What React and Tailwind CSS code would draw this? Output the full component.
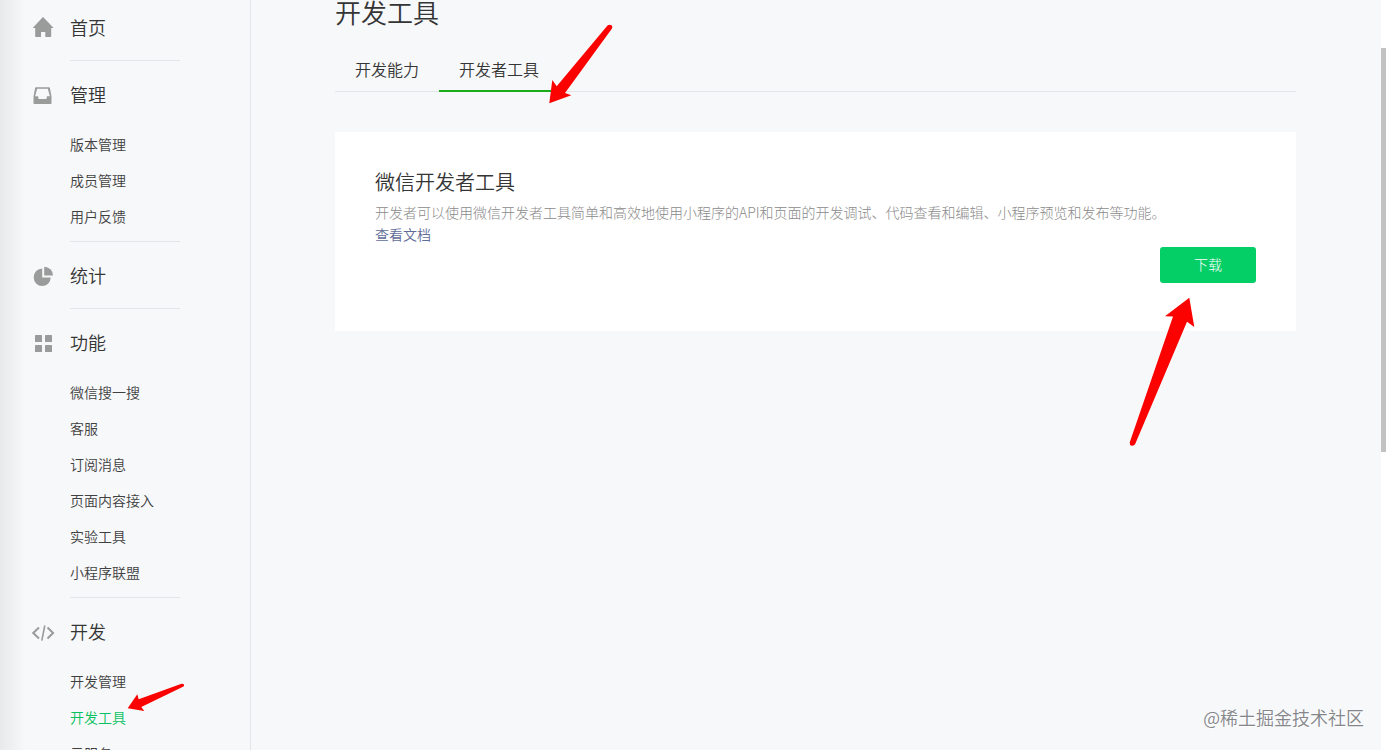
const groups = [
  { title: '首页', icon: HomeIcon, items: [] },
  { title: '管理', icon: TrayIcon, items: ['版本管理', '成员管理', '用户反馈'] },
  { title: '统计', icon: PieIcon, items: [] },
  {
    title: '功能',
    icon: GridIcon,
    items: ['微信搜一搜', '客服', '订阅消息', '页面内容接入', '实验工具', '小程序联盟'],
  },
  { title: '开发', icon: CodeIcon, items: ['开发管理', '开发工具', '云服务'] },
];

function HomeIcon() {
  return (
    <svg viewBox="0 0 24 24" className="size-6 shrink-0 fill-[#9a9b9b]" aria-hidden="true">
      <path d="M12.3 2.2 22.2 12.4c.2.3 0 .6-.3.6H20.200v8.300c0 .4-.3.700-.7.700H14.300v-5h-4.300v5H4.900c-.4 0-.7-.3-.7-.7V13H2.400c-.4 0-.5-.4-.3-.6L11.700 2.200c.2-.2.4-.2.6 0z" />
    </svg>
  );
}

function TrayIcon() {
  return (
    <svg viewBox="1 -2 24 24" className="size-6 shrink-0 fill-[#9a9b9b]" aria-hidden="true">
      <path
        fillRule="evenodd"
        d="M6.400 3.300h13.200c.4 0 .7.2.8.6L22 12.500v6.800c0 .4-.3.700-.7.700H4.700c-.4 0-.7-.3-.7-.7V12.500L5.600 3.900c.1-.4.4-.6.8-.6zM7.700 4.700 5.600 12.200h2.700c.3 0 .5.200.5.5v1.600c0 .5.3.8.800.8h6.800c.5 0 .8-.3.8-.8v-1.600c0-.3.2-.5.5-.5h2.700L18.300 4.700z"
        transform="translate(-.5 0)"
      />
    </svg>
  );
}

function PieIcon() {
  return (
    <svg viewBox="0 -1.500 24 24" className="size-6 shrink-0 fill-[#9a9b9b]" aria-hidden="true">
      <path d="M11.200 4v9h8.500a8.500 8.800 0 1 1-8.500-9z" />
      <path d="M13.200 2.300a8.800 8.800 0 0 1 8.800 8.700h-8.800z" />
    </svg>
  );
}

function GridIcon() {
  return (
    <svg viewBox="0 -1 24 24" className="size-6 shrink-0 fill-[#9a9b9b]" aria-hidden="true">
      <rect x="4" y="4" width="7" height="7" rx=".6" />
      <rect x="14" y="4" width="7" height="7" rx=".6" />
      <rect x="4" y="14" width="7" height="7" rx=".6" />
      <rect x="14" y="14" width="7" height="7" rx=".6" />
    </svg>
  );
}

function CodeIcon() {
  return (
    <svg
      viewBox="0 -2 24 24"
      className="size-6 shrink-0 fill-none stroke-[#9a9b9b] stroke-2"
      aria-hidden="true"
    >
      <path d="M8 6.500 2.200 12 8 17.500M16.500 6.500l5.600 5.500-5.600 5.500" />
      <path d="M13.800 4.500 10.800 19.700" strokeWidth="1.600" />
    </svg>
  );
}

function NavItem({ label }) {
  const active = label === '开发工具';
  return (
    <li className="flex h-9 items-center text-sm">
      <a
        href="#"
        aria-current={active ? 'page' : undefined}
        className={active ? 'relative text-[#07c160]' : 'text-[#404040]'}
      >
        {label}
        {active && (
          <svg
            viewBox="126 683 58 29"
            className="absolute bottom-[15px] left-full h-[29px] w-[58px] fill-[#fb0200]"
            aria-hidden="true"
          >
            <path d="M127.700 708.200 137.300 694.300 138.700 699.200 181.500 683.700Q183.600 683.500 184 684.800 184.300 686 183 686.700L141.300 707 144.300 711z" />
          </svg>
        )}
      </a>
    </li>
  );
}

function Sidebar() {
  return (
    <nav className="w-[251px] shrink-0 overflow-hidden border-r border-[#e4e5e8] bg-linear-to-r from-[#e8e9eb] to-[#f7f8fa] to-10%">
      <div className="-mt-1.5">
        {groups.map(({ title, icon: Icon, items }) => (
          <section key={title}>
            <h2 className="flex h-[66px] items-center gap-[15px] pl-[31px] text-lg font-[350] text-[#353535]">
              <Icon />
              {title}
            </h2>
            <div className="mr-[70px] ml-[70px] border-b border-[#e4e5e8]">
              {items.length > 0 && (
                <ul className="-mt-px pb-[7px]">
                  {items.map((label) => (
                    <NavItem key={label} label={label} />
                  ))}
                </ul>
              )}
            </div>
          </section>
        ))}
      </div>
    </nav>
  );
}

function Tabs() {
  return (
    <div role="tablist" className="mt-[19px] flex border-b border-[#e4e5e8] text-base">
      <button type="button" role="tab" aria-selected="false" className="h-11 px-5">
        开发能力
      </button>
      <button
        type="button"
        role="tab"
        aria-selected="true"
        className="relative -mb-px h-[45px] border-b-2 border-[#1aad19] px-5"
      >
        开发者工具
        <svg
          viewBox="549 24 64 80"
          className="absolute -right-[54px] -bottom-[14px] h-20 w-16 fill-[#fb0200]"
          aria-hidden="true"
        >
          <path d="M549.300 103.300 552.300 80 556.700 86.200 607.500 25.500Q609.500 24 611.500 25.200 613 26.600 612 28.500L565 93 571.300 95.300z" />
        </svg>
      </button>
    </div>
  );
}

function ToolCard() {
  return (
    <section className="mt-10 bg-white px-10 pt-9 pb-12">
      <h2 className="text-xl font-[350]">微信开发者工具</h2>
      <p className="mt-[5px] text-sm leading-[22px] font-light text-[#8a8a8a]">
        开发者可以使用微信开发者工具简单和高效地使用小程序的API和页面的开发调试、代码查看和编辑、小程序预览和发布等功能。
      </p>
      <a href="#" className="block text-sm leading-[22px] text-[#5f6c98]">
        查看文档
      </a>
      <div className="flex justify-end pt-0.5">
        <button
          type="button"
          className="relative h-9 w-24 rounded-[3px] bg-[#04ce66] pb-0.5 text-sm font-light text-white"
        >
          下载
          <svg
            viewBox="1129 297 66 150"
            className="absolute top-[50px] right-[61px] h-[150px] w-[66px] fill-[#fb0200]"
            aria-hidden="true"
          >
            <path d="M1189.300 297.700 1165 316.200 1173 316.400 1129.700 442.500Q1129.500 445 1131.500 445.700 1134 446 1135.200 444L1187 321.700 1194.300 327z" />
          </svg>
        </button>
      </div>
    </section>
  );
}

export default function App() {
  return (
    <div
      lang="zh-CN"
      className="relative flex h-screen overflow-hidden bg-[#f7f8fa] font-['Noto_Sans_CJK_SC',sans-serif] font-[350] text-[#353535]"
    >
      <Sidebar />
      <main className="min-w-0 flex-1 pr-[85px] pl-[84px]">
        <h1 className="-mt-1 text-[26px] leading-8 font-[350]">开发工具</h1>
        <Tabs />
        <ToolCard />
      </main>
      <div className="w-[5px] shrink-0 bg-white pt-12" aria-hidden="true">
        <div className="h-[404px] bg-[#c2c2c2]" />
      </div>
      <p className="absolute right-[22px] bottom-[19px] text-lg text-[#85868a] [text-shadow:1px_1px_1px_#fff]">
        @稀土掘金技术社区
      </p>
    </div>
  );
}
